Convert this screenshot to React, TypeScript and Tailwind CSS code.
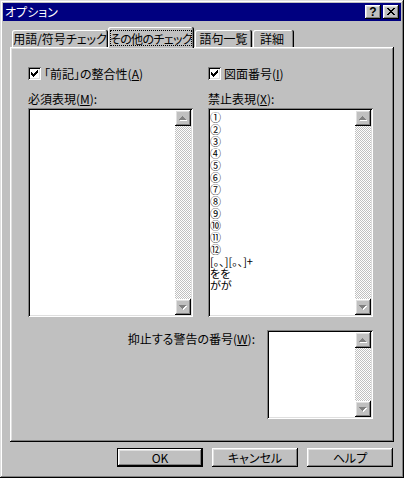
import React from "react";

const FONT = "font-['Noto_Sans_CJK_JP','Noto_Sans_CJK_SC',sans-serif] [font-feature-settings:'palt']";
const RAISED =
  "shadow-[inset_-1px_-1px_#000000,inset_1px_1px_#ffffff,inset_-2px_-2px_#808080,inset_2px_2px_#dfdfdf]";
const SUNKEN =
  "shadow-[inset_1px_1px_#808080,inset_-1px_-1px_#ffffff,inset_2px_2px_#000000,inset_-2px_-2px_#dfdfdf]";

function Pixels({ rows, color, dx = 0, dy = 0 }: { rows: string[]; color: string; dx?: number; dy?: number }) {
  const rects: React.ReactNode[] = [];
  rows.forEach((r, y) =>
    r.split("").forEach((c, x) => {
      if (c === "X") rects.push(<rect key={`${x}-${y}`} x={x + dx} y={y + dy} width={1} height={1} fill={color} />);
    })
  );
  return <>{rects}</>;
}

const CHECK = ["......X", ".....XX", "X...XXX", "XX.XXX.", "XXXXX..", ".XXX...", "..X...."];
const CLOSE = ["XX....XX", ".XX..XX.", "..XXXX..", "...XX...", "..XXXX..", ".XX..XX.", "XX....XX"];
const UP = ["...X...", "..XXX..", ".XXXXX.", "XXXXXXX"];
const DOWN = ["XXXXXXX", ".XXXXX.", "..XXX..", "...X..."];

function Checkbox() {
  return (
    <div className={`w-[13px] h-[13px] bg-white shrink-0 relative ${SUNKEN}`}>
      <svg width="13" height="13" className="absolute left-0 top-0" shapeRendering="crispEdges">
        <Pixels rows={CHECK} color="#000" dx={3} dy={3} />
      </svg>
    </div>
  );
}

function ArrowButton({ dir }: { dir: "up" | "down" }) {
  const rows = dir === "up" ? UP : DOWN;
  return (
    <div className={`w-[16px] h-[16px] bg-[#c0c0c0] flex items-center justify-center shrink-0 ${RAISED}`}>
      <svg width="8" height="5" shapeRendering="crispEdges">
        <Pixels rows={rows} color="#ffffff" dx={1} dy={1} />
        <Pixels rows={rows} color="#808080" />
      </svg>
    </div>
  );
}

function ListBox({ items, className }: { items: string[]; className: string }) {
  return (
    <div className={`bg-white p-[2px] flex ${SUNKEN} ${className}`}>
      <div className="flex-1 overflow-hidden pt-[1px] text-[11px] leading-[12px] text-black">
        {items.map((t, i) => (
          <div key={i} className="whitespace-nowrap h-[12px] leading-[12px]">
            {t}
          </div>
        ))}
      </div>
      <div className="w-[16px] flex flex-col">
        <ArrowButton dir="up" />
        <div className="flex-1 bg-[image:repeating-conic-gradient(#c0c0c0_0%_25%,#ffffff_0%_50%)] bg-[length:2px_2px]" />
        <ArrowButton dir="down" />
      </div>
    </div>
  );
}

function Button({ label, isDefault }: { label: string; isDefault?: boolean }) {
  return (
    <div className={`w-[86px] h-[19px] ${isDefault ? "border border-black" : ""} bg-[#c0c0c0]`}>
      <div className={`w-full h-full flex items-center justify-center text-[12px] leading-[12px] text-black ${RAISED}`}>
        {label}
      </div>
    </div>
  );
}

export default function App() {
  const banned = ["①", "②", "③", "④", "⑤", "⑥", "⑦", "⑧", "⑨", "⑩", "⑪", "⑫", "[。、][。、]+", "をを", "がが"];
  return (
    <div
      className={`w-[404px] h-[478px] bg-[#c0c0c0] p-[3px] ${FONT} shadow-[inset_-1px_-1px_#000000,inset_1px_1px_#dfdfdf,inset_-2px_-2px_#808080,inset_2px_2px_#ffffff] text-black`}
    >
      {/* Title bar */}
      <div className="h-[18px] bg-[#000080] flex items-center pl-[2px] pr-[2px]">
        <span className="text-white text-[12px] leading-[12px]">オプション</span>
        <div className="ml-auto flex gap-[2px]">
          <div className={`w-[16px] h-[14px] bg-[#c0c0c0] flex items-center justify-center ${RAISED}`}>
            <span className="font-['Liberation_Sans',sans-serif] font-bold text-[12px] leading-[12px] -mt-[1px]">?</span>
          </div>
          <div className={`w-[16px] h-[14px] bg-[#c0c0c0] flex items-center justify-center ${RAISED}`}>
            <svg width="8" height="7" shapeRendering="crispEdges" className="-mt-[1px]">
              <Pixels rows={CLOSE} color="#000" />
            </svg>
          </div>
        </div>
      </div>

      <div className="px-[7px] pt-[6px]">
        {/* Tabs */}
        <div className="flex items-end h-[20px] pl-[2px] text-[12px]">
          <div className="w-[96px] h-[17px] rounded-t-[2px] shadow-[inset_-1px_0_#000000,inset_1px_1px_#ffffff,inset_-2px_0_#808080] flex justify-center pt-[2px] leading-[13px] whitespace-nowrap">
            用語/符号チェック
          </div>
          <div className="relative z-10 w-[86px] h-[21px] -mb-px bg-[#c0c0c0] rounded-t-[2px] shadow-[inset_-1px_0_#000000,inset_1px_1px_#ffffff,inset_-2px_0_#808080] pl-[2px] pr-[2px] pt-[3px]">
            <div className="h-[16px] border border-dotted border-black flex items-center justify-center leading-[13px] whitespace-nowrap tracking-[-0.6px] overflow-hidden">
              その他のチェック
            </div>
          </div>
          <div className="ml-[1px] w-[57px] h-[17px] rounded-t-[2px] shadow-[inset_-1px_0_#000000,inset_1px_1px_#ffffff,inset_-2px_0_#808080] flex justify-center pt-[2px] leading-[13px] whitespace-nowrap">
            語句一覧
          </div>
          <div className="ml-[1px] w-[41px] h-[17px] rounded-t-[2px] shadow-[inset_-1px_0_#000000,inset_1px_1px_#ffffff,inset_-2px_0_#808080] pl-[7px] pt-[2px] leading-[13px] whitespace-nowrap">
            詳細
          </div>
        </div>

        {/* Panel */}
        <div className={`h-[395px] ${RAISED} pl-[18px] pt-[19px] text-[12px]`}>
          <div className="grid grid-cols-[165px_165px] gap-x-[15px]">
            <div className="flex flex-col">
              <div className="flex items-center h-[14px] gap-[3px]">
                <Checkbox />
                <span className="leading-[13px] whitespace-nowrap">
                  「前記」の整合性(<u>A</u>)
                </span>
              </div>
              <div className="mt-[12px] h-[13px] leading-[13px]">
                必須表現(<u>M</u>):
              </div>
              <ListBox items={[]} className="mt-[3px] h-[209px]" />
            </div>
            <div className="flex flex-col">
              <div className="flex items-center h-[14px] gap-[3px]">
                <Checkbox />
                <span className="leading-[13px] whitespace-nowrap">
                  図面番号(<u>I</u>)
                </span>
              </div>
              <div className="mt-[12px] h-[13px] leading-[13px]">
                禁止表現(<u>X</u>):
              </div>
              <ListBox items={banned} className="mt-[3px] h-[209px]" />
            </div>
          </div>
          <div className="flex justify-end items-start gap-[12px] pr-[21px] mt-[13px]">
            <div className="mt-[2px] leading-[13px] whitespace-nowrap">
              抑止する警告の番号(<u>W</u>):
            </div>
            <ListBox items={[]} className="w-[106px] h-[89px]" />
          </div>
        </div>

        {/* Buttons */}
        <div className="flex justify-end gap-[9px] mt-[6px] pr-[1px]">
          <Button label="OK" isDefault />
          <Button label="キャンセル" />
          <Button label="ヘルプ" />
        </div>
      </div>
    </div>
  );
}
